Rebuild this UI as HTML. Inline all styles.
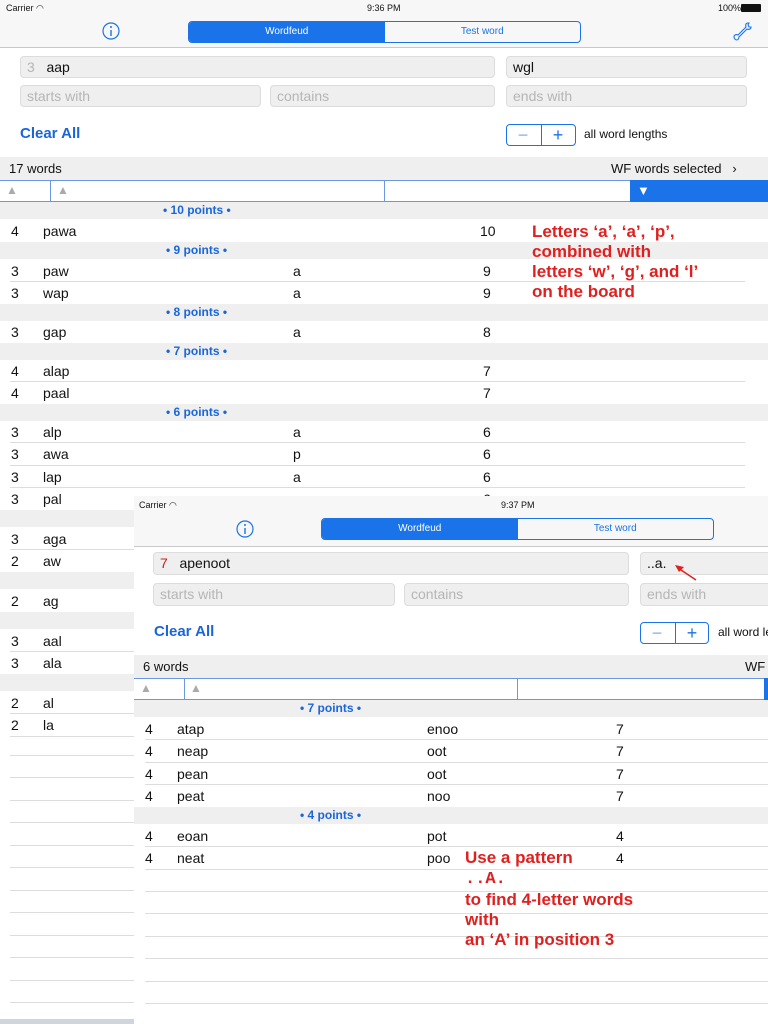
<!DOCTYPE html>
<html><head><meta charset="utf-8"><style>
*{margin:0;padding:0;box-sizing:border-box}
body{width:768px;height:1024px;position:relative;overflow:hidden;background:#fff;font-family:"Liberation Sans",Arial,sans-serif;color:#111}
.a{position:absolute;white-space:nowrap}
.bar{position:absolute;background:#f7f7f7}
.fld{position:absolute;background:#efefef;border:1px solid #dcdcdc;border-radius:4px;font-size:14px;line-height:20px;padding-left:6px;color:#111}
.ph{color:#b5b5b5}
.sec{position:absolute;background:#efefef;height:17px;color:#1a66d9;font-size:12px;font-weight:bold;line-height:17px}
.row{position:absolute;height:22px;font-size:14px;line-height:22px}
.ln{position:absolute;height:1px;background:#ddd}
.seg{position:absolute;border:1px solid #1a73e8;border-radius:4px;overflow:hidden;font-size:10px;display:flex}
.seg div{flex:1;text-align:center;line-height:19px}
.red{color:#e0201e;font-weight:bold;font-size:17px;line-height:20px}
.pm{position:absolute;font-size:18px;line-height:20px;text-align:center;width:34px}
</style></head><body>

<!-- MAIN SCREEN -->
<div class="bar" style="left:0;top:0;width:768px;height:48px;border-bottom:1px solid #c8c8c8"></div>
<div class="a" style="left:6px;top:3px;font-size:9px">Carrier <span style="font-size:9px">&#x25E0;</span></div>
<div class="a" style="left:367px;top:3px;font-size:9px">9:36 PM</div>
<div class="a" style="left:718px;top:3px;font-size:9px">100%</div>
<div class="a" style="left:741px;top:4px;width:20px;height:8px;background:#111;border-radius:1px"></div>
<svg class="a" style="left:102px;top:22px" width="18" height="18"><circle cx="9" cy="9" r="8" fill="none" stroke="#1a73e8" stroke-width="1.2"/><circle cx="9" cy="5" r="1" fill="#1a73e8"/><path d="M9 8v6" stroke="#1a73e8" stroke-width="1.4"/></svg>
<div class="seg" style="left:188px;top:21px;width:393px;height:22px"><div style="background:#1a73e8;color:#fff">Wordfeud</div><div style="color:#1a73e8">Test word</div></div>
<svg class="a" style="left:733px;top:20px" width="20" height="22"><path d="M15 3c-2 0-3 2-2 4l-8 8c-2-1-4 0-4 2s2 3 3 3 2-2 2-3l8-8c2 1 4 0 4-2l-2 0-1-2 1-2z" fill="none" stroke="#1a73e8" stroke-width="1.1"/></svg>

<div class="fld" style="left:20px;top:56px;width:475px;height:22px"><span class="ph">3</span>&nbsp;&nbsp; aap</div>
<div class="fld" style="left:506px;top:56px;width:241px;height:22px">wgl</div>
<div class="fld ph" style="left:20px;top:85px;width:241px;height:22px">starts with</div>
<div class="fld ph" style="left:270px;top:85px;width:225px;height:22px">contains</div>
<div class="fld ph" style="left:506px;top:85px;width:241px;height:22px">ends with</div>
<div class="a" style="left:20px;top:125px;font-size:15px;font-weight:bold;color:#1a66d9">Clear All</div>
<div class="a" style="left:506px;top:124px;width:70px;height:22px;border:1px solid #1a73e8;border-radius:4px"></div>
<div class="a" style="left:541px;top:124px;width:1px;height:22px;background:#1a73e8"></div>
<div class="pm" style="left:506px;top:125px;color:#8ab0e8">−</div>
<div class="pm" style="left:541px;top:125px;color:#1a73e8">+</div>
<div class="a" style="left:584px;top:127px;font-size:12px">all word lengths</div>

<div class="a" style="left:0;top:157px;width:768px;height:23px;background:#efefef"></div>
<div class="a" style="left:9px;top:161px;font-size:13px">17 words</div>
<div class="a" style="left:611px;top:161px;font-size:13px">WF words selected &nbsp;&nbsp;›</div>
<div class="a" style="left:0;top:180px;width:768px;height:22px;border-top:1px solid #6b97e0;border-bottom:1px solid #6b97e0"></div>
<div class="a" style="left:50px;top:180px;width:1px;height:22px;background:#6b97e0"></div>
<div class="a" style="left:384px;top:180px;width:1px;height:22px;background:#6b97e0"></div>
<div class="a" style="left:630px;top:180px;width:138px;height:22px;background:#1a73e8"></div>
<div class="a" style="left:6px;top:183px;font-size:12px;color:#aaa">▲</div>
<div class="a" style="left:57px;top:183px;font-size:12px;color:#aaa">▲</div>
<div class="a" style="left:637px;top:183px;font-size:13px;color:#fff">▼</div>

<div class="sec" style="left:0;top:202px;width:768px"><span class="a" style="left:163px">• 10 points •</span></div>
<div class="sec" style="left:0;top:242px;width:768px"><span class="a" style="left:166px">• 9 points •</span></div>
<div class="sec" style="left:0;top:304px;width:768px"><span class="a" style="left:166px">• 8 points •</span></div>
<div class="sec" style="left:0;top:343px;width:768px"><span class="a" style="left:166px">• 7 points •</span></div>
<div class="sec" style="left:0;top:404px;width:768px"><span class="a" style="left:166px">• 6 points •</span></div>
<div class="sec" style="left:0;top:510px;width:134px"></div>
<div class="sec" style="left:0;top:572px;width:134px"></div>
<div class="sec" style="left:0;top:612px;width:134px"></div>
<div class="sec" style="left:0;top:674px;width:134px"></div>

<div class="row" style="top:220px;left:0;width:768px"><span class="a" style="left:11px">4</span><span class="a" style="left:43px">pawa</span><span class="a" style="left:480px">10</span></div>
<div class="row" style="top:260px;left:0;width:768px"><span class="a" style="left:11px">3</span><span class="a" style="left:43px">paw</span><span class="a" style="left:293px">a</span><span class="a" style="left:483px">9</span></div>
<div class="ln" style="top:281px;left:10px;width:735px"></div>
<div class="row" style="top:282px;left:0;width:768px"><span class="a" style="left:11px">3</span><span class="a" style="left:43px">wap</span><span class="a" style="left:293px">a</span><span class="a" style="left:483px">9</span></div>
<div class="row" style="top:321px;left:0;width:768px"><span class="a" style="left:11px">3</span><span class="a" style="left:43px">gap</span><span class="a" style="left:293px">a</span><span class="a" style="left:483px">8</span></div>
<div class="row" style="top:360px;left:0;width:768px"><span class="a" style="left:11px">4</span><span class="a" style="left:43px">alap</span><span class="a" style="left:483px">7</span></div>
<div class="ln" style="top:381px;left:10px;width:735px"></div>
<div class="row" style="top:382px;left:0;width:768px"><span class="a" style="left:11px">4</span><span class="a" style="left:43px">paal</span><span class="a" style="left:483px">7</span></div>
<div class="row" style="top:421px;left:0;width:768px"><span class="a" style="left:11px">3</span><span class="a" style="left:43px">alp</span><span class="a" style="left:293px">a</span><span class="a" style="left:483px">6</span></div>
<div class="ln" style="top:442px;left:10px;width:735px"></div>
<div class="row" style="top:443px;left:0;width:768px"><span class="a" style="left:11px">3</span><span class="a" style="left:43px">awa</span><span class="a" style="left:293px">p</span><span class="a" style="left:483px">6</span></div>
<div class="ln" style="top:465px;left:10px;width:735px"></div>
<div class="row" style="top:466px;left:0;width:768px"><span class="a" style="left:11px">3</span><span class="a" style="left:43px">lap</span><span class="a" style="left:293px">a</span><span class="a" style="left:483px">6</span></div>
<div class="ln" style="top:487px;left:10px;width:735px"></div>
<div class="row" style="top:488px;left:0;width:768px"><span class="a" style="left:11px">3</span><span class="a" style="left:43px">pal</span><span class="a" style="left:293px">a</span><span class="a" style="left:483px">6</span></div>
<div class="row" style="top:528px;left:0;width:134px"><span class="a" style="left:11px">3</span><span class="a" style="left:43px">aga</span></div>
<div class="ln" style="top:549px;left:10px;width:124px"></div>
<div class="row" style="top:550px;left:0;width:134px"><span class="a" style="left:11px">2</span><span class="a" style="left:43px">aw</span></div>
<div class="row" style="top:590px;left:0;width:134px"><span class="a" style="left:11px">2</span><span class="a" style="left:43px">ag</span></div>
<div class="row" style="top:630px;left:0;width:134px"><span class="a" style="left:11px">3</span><span class="a" style="left:43px">aal</span></div>
<div class="ln" style="top:651px;left:10px;width:124px"></div>
<div class="row" style="top:652px;left:0;width:134px"><span class="a" style="left:11px">3</span><span class="a" style="left:43px">ala</span></div>
<div class="row" style="top:692px;left:0;width:134px"><span class="a" style="left:11px">2</span><span class="a" style="left:43px">al</span></div>
<div class="ln" style="top:713px;left:10px;width:124px"></div>
<div class="row" style="top:714px;left:0;width:134px"><span class="a" style="left:11px">2</span><span class="a" style="left:43px">la</span></div>
<div class="ln" style="top:736px;left:10px;width:124px"></div>
<div class="ln" style="top:755px;left:10px;width:124px"></div>
<div class="ln" style="top:777px;left:10px;width:124px"></div>
<div class="ln" style="top:800px;left:10px;width:124px"></div>
<div class="ln" style="top:822px;left:10px;width:124px"></div>
<div class="ln" style="top:845px;left:10px;width:124px"></div>
<div class="ln" style="top:867px;left:10px;width:124px"></div>
<div class="ln" style="top:890px;left:10px;width:124px"></div>
<div class="ln" style="top:912px;left:10px;width:124px"></div>
<div class="ln" style="top:935px;left:10px;width:124px"></div>
<div class="ln" style="top:957px;left:10px;width:124px"></div>
<div class="ln" style="top:980px;left:10px;width:124px"></div>
<div class="ln" style="top:1002px;left:10px;width:124px"></div>
<div class="a" style="left:0;top:1019px;width:134px;height:5px;background:#d0d4dc"></div>

<div class="a red" style="left:532px;top:222px">Letters ‘a’, ‘a’, ‘p’,<br>combined with<br>letters ‘w’, ‘g’, and ‘l’<br>on the board</div>

<!-- OVERLAY SCREEN -->
<div class="a" style="left:134px;top:496px;width:634px;height:528px;background:#fff"></div>
<div class="bar" style="left:134px;top:496px;width:634px;height:51px;border-bottom:1px solid #c8c8c8"></div>
<div class="a" style="left:139px;top:500px;font-size:9px">Carrier &#x25E0;</div>
<div class="a" style="left:501px;top:500px;font-size:9px">9:37 PM</div>
<svg class="a" style="left:236px;top:520px" width="18" height="18"><circle cx="9" cy="9" r="8" fill="none" stroke="#1a73e8" stroke-width="1.2"/><circle cx="9" cy="5" r="1" fill="#1a73e8"/><path d="M9 8v6" stroke="#1a73e8" stroke-width="1.4"/></svg>
<div class="seg" style="left:321px;top:518px;width:393px;height:22px"><div style="background:#1a73e8;color:#fff">Wordfeud</div><div style="color:#1a73e8">Test word</div></div>

<div class="fld" style="left:153px;top:552px;width:476px;height:23px;font-size:14px"><span style="color:#c82020">7</span>&nbsp;&nbsp; apenoot</div>
<div class="fld" style="left:640px;top:552px;width:140px;height:23px">..a.</div>
<svg class="a" style="left:672px;top:562px" width="26" height="20"><path d="M24 18L6 6" stroke="#e0201e" stroke-width="1.5"/><path d="M3 3l9 2-5 5z" fill="#e0201e"/></svg>
<div class="fld ph" style="left:153px;top:583px;width:242px;height:23px">starts with</div>
<div class="fld ph" style="left:404px;top:583px;width:225px;height:23px">contains</div>
<div class="fld ph" style="left:640px;top:583px;width:140px;height:23px">ends with</div>
<div class="a" style="left:154px;top:623px;font-size:15px;font-weight:bold;color:#1a66d9">Clear All</div>
<div class="a" style="left:640px;top:622px;width:69px;height:22px;border:1px solid #1a73e8;border-radius:4px"></div>
<div class="a" style="left:675px;top:622px;width:1px;height:22px;background:#1a73e8"></div>
<div class="pm" style="left:640px;top:623px;color:#8ab0e8">−</div>
<div class="pm" style="left:675px;top:623px;color:#1a73e8">+</div>
<div class="a" style="left:718px;top:625px;font-size:12px">all word le</div>

<div class="a" style="left:134px;top:655px;width:634px;height:23px;background:#efefef"></div>
<div class="a" style="left:143px;top:659px;font-size:13px">6 words</div>
<div class="a" style="left:745px;top:659px;font-size:13px">WF</div>
<div class="a" style="left:134px;top:678px;width:634px;height:22px;border-top:1px solid #6b97e0;border-bottom:1px solid #6b97e0"></div>
<div class="a" style="left:184px;top:678px;width:1px;height:22px;background:#6b97e0"></div>
<div class="a" style="left:517px;top:678px;width:1px;height:22px;background:#6b97e0"></div>
<div class="a" style="left:764px;top:678px;width:4px;height:22px;background:#1a73e8"></div>
<div class="a" style="left:140px;top:681px;font-size:12px;color:#aaa">▲</div>
<div class="a" style="left:190px;top:681px;font-size:12px;color:#aaa">▲</div>

<div class="sec" style="left:134px;top:700px;width:634px"><span class="a" style="left:166px">• 7 points •</span></div>
<div class="sec" style="left:134px;top:807px;width:634px"><span class="a" style="left:166px">• 4 points •</span></div>

<div class="row" style="top:718px;left:134px;width:634px"><span class="a" style="left:11px">4</span><span class="a" style="left:43px">atap</span><span class="a" style="left:293px">enoo</span><span class="a" style="left:482px">7</span></div>
<div class="ln" style="top:739px;left:145px;width:623px"></div>
<div class="row" style="top:740px;left:134px;width:634px"><span class="a" style="left:11px">4</span><span class="a" style="left:43px">neap</span><span class="a" style="left:293px">oot</span><span class="a" style="left:482px">7</span></div>
<div class="ln" style="top:762px;left:145px;width:623px"></div>
<div class="row" style="top:763px;left:134px;width:634px"><span class="a" style="left:11px">4</span><span class="a" style="left:43px">pean</span><span class="a" style="left:293px">oot</span><span class="a" style="left:482px">7</span></div>
<div class="ln" style="top:784px;left:145px;width:623px"></div>
<div class="row" style="top:785px;left:134px;width:634px"><span class="a" style="left:11px">4</span><span class="a" style="left:43px">peat</span><span class="a" style="left:293px">noo</span><span class="a" style="left:482px">7</span></div>
<div class="row" style="top:825px;left:134px;width:634px"><span class="a" style="left:11px">4</span><span class="a" style="left:43px">eoan</span><span class="a" style="left:293px">pot</span><span class="a" style="left:482px">4</span></div>
<div class="ln" style="top:846px;left:145px;width:623px"></div>
<div class="row" style="top:847px;left:134px;width:634px"><span class="a" style="left:11px">4</span><span class="a" style="left:43px">neat</span><span class="a" style="left:293px">poo</span><span class="a" style="left:482px">4</span></div>
<div class="ln" style="top:869px;left:145px;width:623px"></div>
<div class="ln" style="top:891px;left:145px;width:623px"></div>
<div class="ln" style="top:913px;left:145px;width:623px"></div>
<div class="ln" style="top:936px;left:145px;width:623px"></div>
<div class="ln" style="top:958px;left:145px;width:623px"></div>
<div class="ln" style="top:981px;left:145px;width:623px"></div>
<div class="ln" style="top:1003px;left:145px;width:623px"></div>

<div class="a red" style="left:465px;top:848px">Use a pattern<br><span style="font-family:'Liberation Mono',monospace">..A.</span><br>to find 4-letter words<br>with<br>an ‘A’ in position 3</div>

</body></html>
